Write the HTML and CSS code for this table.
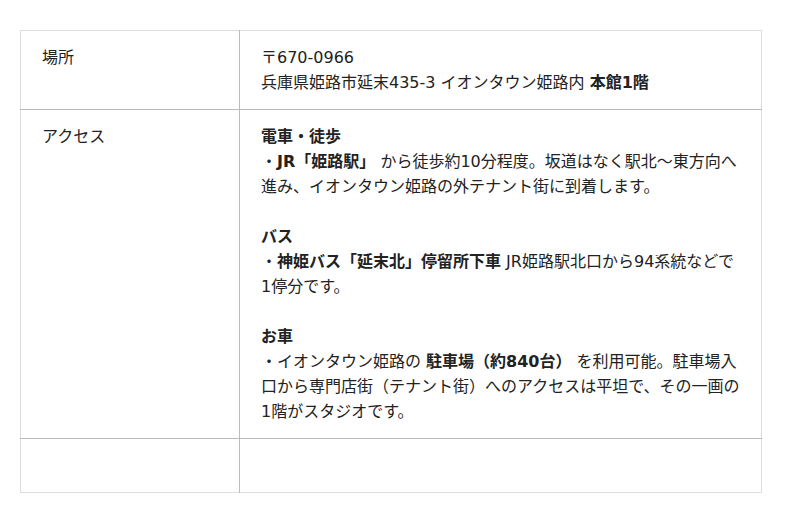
FILE: index.html
```html
<!DOCTYPE html>
<html lang="ja">
<head>
<meta charset="utf-8">
<link rel="stylesheet" href="styles.css">
</head>
<body>
<table class="info">
  <tr>
    <th>場所</th>
    <td>〒670-0966<br>兵庫県姫路市延末435-3 イオンタウン姫路内 <strong>本館1階</strong></td>
  </tr>
  <tr>
    <th>アクセス</th>
    <td>
      <strong>電車・徒歩</strong><br>
      ・<strong>JR「姫路駅」</strong> から徒歩約10分程度。坂道はなく駅北～東方向へ進み、イオンタウン姫路の外テナント街に到着します。<br><br>
      <strong>バス</strong><br>
      ・<strong>神姫バス「延末北」停留所下車</strong> JR姫路駅北口から94系統などで1停分です。<br><br>
      <strong>お車</strong><br>
      ・イオンタウン姫路の <strong>駐車場（約840台）</strong> を利用可能。駐車場入口から専門店街（テナント街）へのアクセスは平坦で、その一画の1階がスタジオです。
    </td>
  </tr>
  <tr>
    <th></th>
    <td></td>
  </tr>
</table>
</body>
</html>
```
FILE: styles.css
```css
html, body {
  margin: 0;
  padding: 0;
  background: #fff;
}
body {
  padding: 30px 38px 30px 20px;
  font-family: "DejaVu Sans", "Noto Sans CJK JP", sans-serif;
  font-size: 16px;
  line-height: 25px;
  color: #222;
}
.info {
  width: 742px;
  border-collapse: collapse;
  border: 1px solid #ddd;
}
.info th,
.info td {
  vertical-align: top;
  text-align: left;
  font-weight: normal;
  padding: 14px 21px 14px 21px;
  border-top: 1px solid #bbb;
  height: 25px;
}
.info tr:first-child th,
.info tr:first-child td {
  border-top: 1px solid #ddd;
}
.info th {
  width: 176px;
  border-right: 1px solid #bbb;
}
.info strong {
  font-weight: bold;
}
```
